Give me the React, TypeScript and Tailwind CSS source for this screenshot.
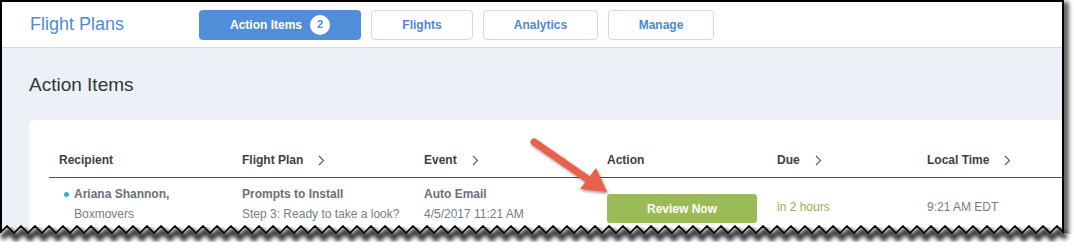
import React from 'react';

const navItems = ['Flights', 'Analytics', 'Manage'];

const Chevron = () => (
  <svg width="7" height="11" viewBox="0 0 7 11" className="ml-[15px] inline-block">
    <path d="M1 1l4.5 4.5L1 10" fill="none" stroke="#55595f" strokeWidth="1.1" />
  </svg>
);

const HeaderCell: React.FC<{ label: string; sort?: boolean; first?: boolean }> = ({ label, sort, first }) => (
  <div className={`flex items-center font-bold text-[12px] leading-[16px] text-[#3b3f46] ${first ? 'pl-[10px]' : ''}`}>
    {label}
    {sort && <Chevron />}
  </div>
);

// torn paper edge along the bottom of the screenshot frame
const TornEdge = () => {
  const pts: string[] = [];
  const shadow: string[] = [];
  for (let x = 0, i = 0; x <= 1064; x += 7, i++) {
    const y = i % 2 === 0 ? 233 : 226;
    pts.push(`${x},${y}`);
    shadow.push(`${x + 2},${y + 5}`);
  }
  const fill = [...pts, '1074,235', '1074,249', '0,249'].join(' ');
  return (
    <svg className="pointer-events-none absolute left-0 top-0" width="1074" height="249">
      <defs>
        <filter id="blur" x="-5%" y="-50%" width="110%" height="200%">
          <feGaussianBlur stdDeviation="2" />
        </filter>
      </defs>
      <polygon points={fill} fill="#ffffff" />
      <polyline points={shadow.join(' ')} fill="none" stroke="rgba(0,0,0,0.8)" strokeWidth="6" filter="url(#blur)" />
      <polyline points={pts.join(' ')} fill="none" stroke="#000" strokeWidth="1.6" />
    </svg>
  );
};

const Arrow = () => (
  <svg className="pointer-events-none absolute left-0 top-0" width="1074" height="249">
    <defs>
      <filter id="ash" x="-30%" y="-30%" width="160%" height="160%">
        <feDropShadow dx="1" dy="1.5" stdDeviation="1.5" floodColor="#000" floodOpacity="0.45" />
      </filter>
    </defs>
    <g filter="url(#ash)" fill="#e9604b">
      <line x1="534" y1="142" x2="589" y2="180" stroke="#e9604b" strokeWidth="7" strokeLinecap="round" />
      <polygon points="607,192 580,189 596,168" />
    </g>
  </svg>
);

const App: React.FC = () => {
  return (
    <div className="relative w-[1074px] h-[249px] bg-white overflow-hidden" style={{ fontFamily: '"Liberation Sans", Arial, sans-serif' }}>
      <div className="w-[1064px] h-[240px] border-x-2 border-t-2 border-black overflow-hidden shadow-[5px_2px_4px_rgba(0,0,0,0.6)]">
        {/* top bar */}
        <div className="flex items-center h-[46px] bg-white border-b border-[#d7d9dd] pl-[28px]">
          <div className="w-[169px] text-[18px] text-[#4f8ad8]">Flight Plans</div>
          <div className="flex gap-[10px]">
            <button className="flex items-center justify-center w-[162px] h-[30px] rounded-[4px] bg-[#518ed9] text-white text-[12px] font-bold">
              Action Items
              <span className="ml-[8px] flex items-center justify-center w-[20px] h-[20px] rounded-full bg-white text-[#518ed9] text-[11px]">2</span>
            </button>
            {navItems.map((n) => (
              <button
                key={n}
                className={`h-[30px] rounded-[4px] border border-[#c9daf1] bg-white text-[12px] font-bold text-[#4d88d6] ${
                  n === 'Flights' ? 'w-[102px]' : n === 'Analytics' ? 'w-[115px]' : 'w-[106px]'
                }`}
              >
                {n}
              </button>
            ))}
          </div>
        </div>

        {/* main */}
        <div className="bg-[#edf0f7] h-full pl-[27px] pt-[25px]">
          <h1 className="text-[19px] leading-[24px] text-[#33363b] mb-[23px]">Action Items</h1>
          <div className="bg-white rounded-l-[6px] -mr-[10px] pl-[20px] pt-[32px] h-[200px]">
            <div className="grid grid-cols-[193px_182px_183px_170px_150px_1fr] border-b border-[#4a4e55] pb-[9px]">
              <HeaderCell label="Recipient" first />
              <HeaderCell label="Flight Plan" sort />
              <HeaderCell label="Event" sort />
              <HeaderCell label="Action" />
              <HeaderCell label="Due" sort />
              <HeaderCell label="Local Time" sort />
            </div>
            <div className="grid grid-cols-[193px_182px_183px_170px_150px_1fr] pt-[6px] text-[12px] leading-[20px]">
              <div className="flex pl-[15px]">
                <span className="mt-[8px] mr-[5px] w-[5px] h-[5px] rounded-full bg-[#45a6de]" />
                <div>
                  <div className="font-bold text-[#6b7079]">Ariana Shannon,</div>
                  <div className="text-[#777c85]">Boxmovers</div>
                </div>
              </div>
              <div>
                <div className="font-bold text-[#6b7079]">Prompts to Install</div>
                <div className="text-[#777c85]">Step 3: Ready to take a look?</div>
              </div>
              <div>
                <div className="font-bold text-[#6b7079]">Auto Email</div>
                <div className="text-[#777c85]">4/5/2017 11:21 AM</div>
              </div>
              <div>
                <button className="mt-[10px] w-[150px] h-[29px] rounded-[3px] bg-[#9bbb59] text-white font-bold text-[12px]">
                  Review Now
                </button>
              </div>
              <div className="mt-[13px] text-[#8db44c]">in 2 hours</div>
              <div className="mt-[13px] text-[#777c85]">9:21 AM EDT</div>
            </div>
          </div>
        </div>
      </div>
      <Arrow />
      <TornEdge />
    </div>
  );
};

export default App;
